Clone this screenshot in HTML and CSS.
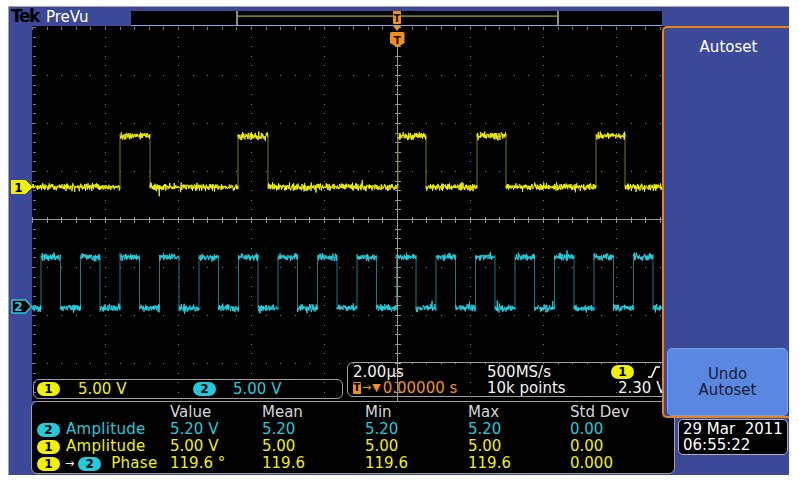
FILE: index.html
```html
<!DOCTYPE html>
<html>
<head>
<meta charset="utf-8">
<title>Tek PreVu</title>
<link rel="stylesheet" href="styles.css">
</head>
<body>
<div class="scope">
  <div class="topbar">
    <div class="brand"><span class="tek">Tek</span><span class="prevu">PreVu</span></div>
    <svg class="record" width="531" height="16" viewBox="131 10 531 16">
      <rect x="131" y="11" width="531" height="14" fill="#000"/>
      <rect x="131" y="25" width="531" height="1" fill="#8fa2e2"/>
      <rect x="236" y="11" width="2" height="14" fill="#8c8c8c"/>
      <rect x="557" y="11" width="2" height="14" fill="#8c8c8c"/>
      <rect x="238" y="15.5" width="319" height="1.2" fill="#b4b400"/>
      <rect x="393" y="11" width="8" height="13" rx="1" fill="#f0901a"/>
      <text x="397" y="22" class="tmark-s">T</text>
    </svg>
  </div>
  <div class="main">
    <div class="strip">
      <svg class="marker m1" width="22" height="14" viewBox="0 0 22 14">
        <path d="M0.5 0.5 H14.5 L21 7 L14.5 13.5 H0.5 Z" class="m1-shape"/>
        <text x="7.5" y="11.5">1</text>
      </svg>
      <svg class="marker m2" width="22" height="15" viewBox="0 0 22 15">
        <path d="M1 1 H14.5 L20.5 7.5 L14.5 14 H1 Z" class="m2-shape"/>
        <text x="7.5" y="12">2</text>
      </svg>
    </div>
    <div class="screen">
      <svg class="grat" width="757" height="375" viewBox="32 26 757 375">
        <g class="dotv">
          <line x1="105.5" y1="27" x2="105.5" y2="411"/>
          <line x1="178.5" y1="27" x2="178.5" y2="411"/>
          <line x1="251.5" y1="27" x2="251.5" y2="411"/>
          <line x1="324.5" y1="27" x2="324.5" y2="411"/>
          <line x1="470.5" y1="27" x2="470.5" y2="411"/>
          <line x1="543.5" y1="27" x2="543.5" y2="411"/>
          <line x1="616.5" y1="27" x2="616.5" y2="411"/>
          <line x1="689.5" y1="27" x2="689.5" y2="411"/>
        </g>
        <g class="doth">
          <line x1="32" y1="75.5" x2="762" y2="75.5"/>
          <line x1="32" y1="123.5" x2="762" y2="123.5"/>
          <line x1="32" y1="171.5" x2="762" y2="171.5"/>
          <line x1="32" y1="267.5" x2="762" y2="267.5"/>
          <line x1="32" y1="315.5" x2="762" y2="315.5"/>
          <line x1="32" y1="363.5" x2="762" y2="363.5"/>
        </g>
        <line class="tickh" x1="32" y1="28" x2="762" y2="28"/>
        <line class="tickv" x1="34" y1="27" x2="34" y2="411"/>
        <line class="center" x1="397.5" y1="46" x2="397.5" y2="411"/>
        <line class="center" x1="32" y1="219.5" x2="762" y2="219.5"/>
        <line class="ctickv" x1="397.5" y1="27" x2="397.5" y2="411"/>
        <line class="ctickh" x1="32" y1="219.5" x2="762" y2="219.5"/>
        <polygon points="393,26 401,26 397,31" fill="#f0901a"/>
        <path d="M391.5 32 H403 Q404.5 32 404.5 33.5 V43 L398 47 H397 L390 43 V33.5 Q390 32 391.5 32 Z" fill="#f0901a"/>
        <text x="397.3" y="43.5" class="tmark">T</text>
        <path id="w1e" class="edge1" d=""/>
        <path id="w1b" class="band1" d=""/>
        <path id="w2e" class="edge2" d=""/>
        <path id="w2b" class="band2" d=""/>
      </svg>
      <div class="readouts">
        <div class="chbox">
          <b class="pill p1">1</b><span class="chval y">5.00 V</span>
          <b class="pill p2">2</b><span class="chval2 c">5.00 V</span>
        </div>
        <div class="hbox">
          <span>2.00µs</span>
          <span>500MS/s</span>
          <span class="trig"><b class="pill p1">1</b><svg class="slope" width="12" height="12" viewBox="0 0 12 12"><path d="M0 11 H3.5 L8 1 H12"/></svg></span>
          <span class="org"><b class="tico">T</b><i class="arr">→</i><i class="tri">▼</i>0.00000 s</span>
          <span>10k points</span>
          <span class="lvl">2.30 V</span>
        </div>
      </div>
    </div>
  </div>
  <div class="bottom">
    <div class="meas">
      <div class="mrow head"><span></span><span>Value</span><span>Mean</span><span>Min</span><span>Max</span><span>Std Dev</span></div>
      <div class="mrow c"><span class="lbl"><b class="pill p2">2</b><span class="lt">Amplitude</span></span><span>5.20 V</span><span>5.20</span><span>5.20</span><span>5.20</span><span>0.00</span></div>
      <div class="mrow y"><span class="lbl"><b class="pill p1">1</b><span class="lt">Amplitude</span></span><span>5.00 V</span><span>5.00</span><span>5.00</span><span>5.00</span><span>0.00</span></div>
      <div class="mrow y"><span class="lbl"><b class="pill p1">1</b><i class="marr">→</i><b class="pill p2">2</b><span class="ph">Phase</span></span><span>119.6 °</span><span>119.6</span><span>119.6</span><span>119.6</span><span>0.000</span></div>
    </div>
    <div class="date">29 Mar&nbsp; 2011<br>06:55:22</div>
  </div>
  <div class="menu">
    <div class="menu-title">Autoset</div>
    <div class="undo">Undo<br>Autoset</div>
  </div>
</div>
<script src="script.js"></script>
</body>
</html>
```

FILE: styles.css
```css
* { box-sizing: border-box; }
body {
  margin: 0;
  background: #ffffff;
  font-family: "DejaVu Sans", "Liberation Sans", sans-serif;
}
.scope {
  position: relative;
  margin: 6px 0 0 8px;
  width: 781px;
  height: 469px;
  border-left: 1px solid #a4a4a4;
  border-top: 1px solid #a4a4a4;
  background: #3c4998;
  display: flex;
  flex-direction: column;
  overflow: hidden;
}
.topbar { height: 19px; display: flex; flex: none; }
.brand {
  width: 122px;
  padding-left: 2px;
  line-height: 19px;
  display: flex;
  align-items: baseline;
}
.tek { font-weight: bold; font-size: 17px; color: #000; letter-spacing: -1.4px; }
.prevu { color: #fff; font-size: 15px; margin-left: 7px; }
.record { display: block; margin-top: 3px; }
.tmark-s { font: bold 10px "DejaVu Sans", sans-serif; fill: #1a1000; text-anchor: middle; }
.main { height: 375px; display: flex; flex: none; }
.strip { width: 23px; position: relative; flex: none; }
.marker { position: absolute; left: 2px; display: block; }
.marker text { font: bold 12px "DejaVu Sans", sans-serif; text-anchor: middle; }
.m1 { top: 154px; }
.m1-shape { fill: #f0f000; stroke: #f0f000; }
.m1 text { fill: #000; }
.m2 { top: 273px; }
.m2-shape { fill: #000; stroke: #22cadc; stroke-width: 1.5; }
.m2 text { fill: #22cadc; }
.screen {
  flex: 1;
  position: relative;
  background: #000;
  display: flex;
  flex-direction: column;
  justify-content: flex-end;
  padding: 0 0 2px 1px;
}
.grat { position: absolute; left: 0; top: 0; display: block; }
.dotv line { stroke: #808080; stroke-width: 1; stroke-dasharray: 1 8.6; shape-rendering: crispEdges; }
.doth line { stroke: #808080; stroke-width: 1; stroke-dasharray: 1 13.6; shape-rendering: crispEdges; }
.tickh { stroke: #7a7a7a; stroke-width: 3; stroke-dasharray: 1 13.6; shape-rendering: crispEdges; }
.tickv { stroke: #7a7a7a; stroke-width: 3; stroke-dasharray: 1 8.6; shape-rendering: crispEdges; }
.center { stroke: #9a978a; stroke-width: 1; shape-rendering: crispEdges; }
.ctickv { stroke: #9a978a; stroke-width: 6; stroke-dasharray: 1 8.6; shape-rendering: crispEdges; }
.ctickh { stroke: #9a978a; stroke-width: 6; stroke-dasharray: 1 13.6; shape-rendering: crispEdges; }
.tmark { font: bold 11px "DejaVu Sans", sans-serif; fill: #1a1000; text-anchor: middle; }
.band1 { fill: none; stroke: #eeee10; stroke-width: 1; }
.edge1 { fill: none; stroke: #7c7c08; stroke-width: 1; }
.band2 { fill: none; stroke: #26cede; stroke-width: 1; }
.edge2 { fill: none; stroke: #137a86; stroke-width: 1; }
.readouts { position: relative; display: flex; align-items: flex-end; }
.y { color: #f0f000; }
.c { color: #22cadc; }
.pill {
  display: inline-block;
  width: 23px;
  height: 14px;
  border-radius: 7px;
  font-size: 12px;
  line-height: 14px;
  font-weight: bold;
  text-align: center;
  color: #000;
  flex: none;
}
.p1 { background: #f0f000; }
.p2 { background: #22cadc; }
.chbox {
  width: 310px;
  height: 20px;
  border: 1px solid #a0a0a0;
  border-radius: 6px;
  display: flex;
  align-items: center;
  padding-left: 3px;
  font-size: 15px;
  line-height: 18px;
}
.chval { margin-left: 18px; width: 115px; }
.chval2 { margin-left: 17px; }
.hbox {
  margin-left: 4px;
  margin-bottom: 2px;
  width: 360px;
  height: 35px;
  border: 1px solid #a0a0a0;
  border-radius: 6px;
  display: grid;
  grid-template-columns: 134px 124px 1fr;
  grid-auto-rows: 16px;
  padding: 1px 0 0 5px;
  font-size: 15px;
  line-height: 16px;
  color: #f2f2f2;
  white-space: nowrap;
}
.trig { display: flex; align-items: center; }
.slope { margin-left: 14px; display: block; }
.slope path { fill: none; stroke: #fff; stroke-width: 1.6; }
.org { color: #f0901a; display: flex; align-items: center; }
.tico {
  display: inline-block;
  width: 8px;
  height: 12px;
  background: #f0901a;
  color: #000;
  font-size: 10px;
  line-height: 12px;
  text-align: center;
  border-radius: 1px;
}
.arr { font-style: normal; font-size: 11px; margin: 0 1px 0 1px; }
.tri { font-style: normal; font-size: 11px; margin-right: 2px; }
.lvl { padding-left: 7px; }
.bottom { height: 74px; display: flex; align-items: flex-start; flex: none; }
.meas {
  margin-left: 22px;
  width: 644px;
  height: 73px;
  background: #000;
  border: 1px solid #a0a0a0;
  border-radius: 6px;
  padding: 2px 0 0 5px;
  font-size: 15px;
}
.mrow {
  display: grid;
  grid-template-columns: 133px 92px 103px 103px 102px 1fr;
  height: 17px;
  line-height: 17px;
  white-space: nowrap;
}
.head { color: #d6d6d6; }
.lbl { display: flex; align-items: center; }
.lt { margin-left: 6px; letter-spacing: 0.3px; }
.marr { font-style: normal; color: #fff; font-size: 11px; margin: 0 4px 0 5px; }
.ph { margin-left: 10px; letter-spacing: 0.3px; }
.date {
  margin: 18px 0 0 3px;
  width: 110px;
  height: 36px;
  background: #000;
  border: 1px solid #b0b0b0;
  border-radius: 5px;
  color: #fff;
  font-size: 15px;
  line-height: 16px;
  padding: 1px 0 0 4px;
  white-space: nowrap;
}
.menu {
  position: absolute;
  left: 653px;
  top: 19px;
  width: 127px;
  height: 392px;
  border: 2px solid #e8821a;
  border-right: 0;
  border-radius: 5px 0 0 5px;
  background: #3c4998;
  display: flex;
  flex-direction: column;
  align-items: center;
}
.menu-title {
  margin-top: 11px;
  color: #fff;
  font-size: 15px;
  line-height: 17px;
  padding-left: 4px;
}
.undo {
  margin-top: auto;
  align-self: flex-start;
  margin-left: 3px;
  width: 121px;
  height: 68px;
  background: #5a88e0;
  border: 1px solid #78a0ee;
  border-radius: 5px;
  color: #151b35;
  font-size: 15px;
  line-height: 16px;
  text-align: center;
  display: flex;
  align-items: center;
  justify-content: center;
}
```

FILE: script.js
```js
(function () {
  var seed = 20110329;
  function rnd() { seed = (seed * 16807) % 2147483647; return seed / 2147483647; }
  function nz(a) { return (rnd() + rnd() + rnd() - 1.5) * a; }
  function trace(lo, hi, edges, x0, x1, amp) {
    var band = '', edge = '', state = false, prev = x0, segs = [];
    edges.forEach(function (e) { segs.push([prev, e, state]); state = !state; prev = e; });
    segs.push([prev, x1, state]);
    segs.forEach(function (s) {
      var lvl = s[2] ? hi : lo;
      var d = 'M' + s[0].toFixed(1) + ' ' + (lvl + nz(amp)).toFixed(1);
      for (var x = s[0] + 0.25; x <= s[1]; x += 0.25) {
        var y = lvl + nz(amp);
        if (rnd() < 0.012) y += (rnd() - 0.5) * amp * 4;
        d += 'L' + x.toFixed(2) + ' ' + y.toFixed(1);
      }
      band += d;
    });
    edges.forEach(function (e) { edge += 'M' + e.toFixed(1) + ' ' + (lo + 2) + 'V' + (hi - 2); });
    return [band, edge];
  }
  var t1 = trace(187, 136, [120, 150, 238, 268, 398, 426, 477, 506, 596, 625], 32, 762, 3.4);
  document.getElementById('w1b').setAttribute('d', t1[0]);
  document.getElementById('w1e').setAttribute('d', t1[1]);
  var e2 = [];
  for (var k = 0; k < 19; k++) {
    var r = 41 + 39.5 * k;
    if (r < 762) e2.push(r);
    if (r + 19.5 < 762) e2.push(r + 19.5);
  }
  var t2 = trace(308, 257, e2, 32, 762, 3.4);
  document.getElementById('w2b').setAttribute('d', t2[0]);
  document.getElementById('w2e').setAttribute('d', t2[1]);
})();
```
